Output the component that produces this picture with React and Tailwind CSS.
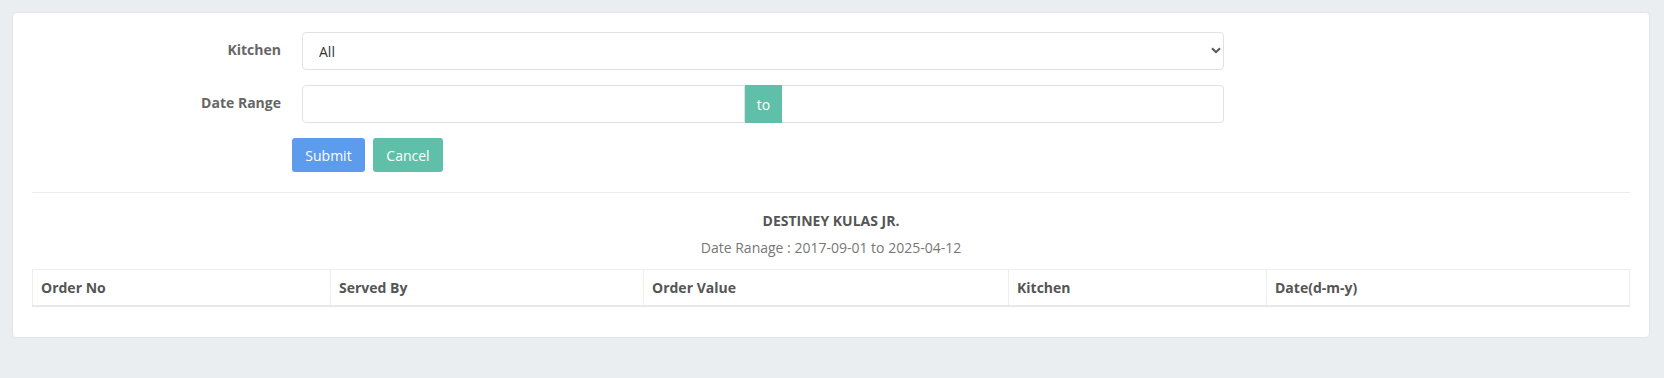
import React from "react";

export default function App() {
  return (
    <div className="min-h-[378px] bg-[#eaeef1] pl-[12px] pr-[14px] pt-[12px] pb-[40px] font-['Open_Sans',sans-serif] text-[14px]">
      <div className="rounded-[4px] border border-[#e1e5e9] bg-white px-[19px] pt-[19px] pb-[30px]">
        {/* Kitchen row */}
        <div className="flex items-center">
          <label className="w-[249px] pb-[3px] text-right font-bold text-[#666666]">Kitchen</label>
          <div className="relative ml-[21px] w-[922px]">
            <select className="h-[38px] w-full appearance-none rounded-[4px] border border-[#e2e2e2] bg-white pl-[16px] pr-[30px] text-[14px] text-[#333333] outline-none">
              <option>All</option>
            </select>
            <svg className="pointer-events-none absolute right-[3px] top-[15px]" width="10" height="7" viewBox="0 0 10 7">
              <path d="M1 1.2 L5 5.2 L9 1.2" fill="none" stroke="#555555" strokeWidth="2" />
            </svg>
          </div>
        </div>

        {/* Date Range row */}
        <div className="mt-[15px] flex items-center">
          <label className="w-[249px] pb-[3px] text-right font-bold text-[#666666]">Date Range</label>
          <div className="ml-[21px] flex h-[38px] w-[922px]">
            <input className="h-full w-[443px] rounded-l-[4px] border border-[#e2e2e2] outline-none" />
            <span className="flex h-full w-[37px] items-center justify-center bg-[#5fbfa9] text-white">to</span>
            <input className="h-full flex-1 rounded-r-[4px] border border-l-0 border-[#e2e2e2] outline-none" />
          </div>
        </div>

        {/* Buttons */}
        <div className="mt-[15px] flex gap-[8px] pl-[260px]">
          <button className="h-[34px] w-[73px] rounded-[3px] bg-[#5d9cec] text-white">Submit</button>
          <button className="h-[34px] w-[70px] rounded-[3px] bg-[#5fbfa9] text-white">Cancel</button>
        </div>

        <div className="mt-[20px] h-px bg-[#e9ecef]" />

        <div className="mt-[18px] text-center leading-[20px] font-bold text-[#555555]">DESTINEY KULAS JR.</div>
        <div className="mt-[7px] text-center leading-[20px] text-[#777777]">Date Ranage : 2017-09-01 to 2025-04-12</div>

        <table className="mt-[11px] w-full table-fixed border-collapse">
          <thead>
            <tr className="text-left">
              <th className="w-[298px] border border-b-2 border-[#eceeef] border-b-[#e6e9ec] px-[8px] py-[7px] leading-[21px] font-bold text-[#555555]">Order No</th>
              <th className="w-[313px] border border-b-2 border-[#eceeef] border-b-[#e6e9ec] px-[8px] py-[7px] leading-[21px] font-bold text-[#555555]">Served By</th>
              <th className="w-[365px] border border-b-2 border-[#eceeef] border-b-[#e6e9ec] px-[8px] py-[7px] leading-[21px] font-bold text-[#555555]">Order Value</th>
              <th className="w-[258px] border border-b-2 border-[#eceeef] border-b-[#e6e9ec] px-[8px] py-[7px] leading-[21px] font-bold text-[#555555]">Kitchen</th>
              <th className="border border-b-2 border-[#eceeef] border-b-[#e6e9ec] px-[8px] py-[7px] leading-[21px] font-bold text-[#555555]">Date(d-m-y)</th>
            </tr>
          </thead>
        </table>
      </div>
    </div>
  );
}
